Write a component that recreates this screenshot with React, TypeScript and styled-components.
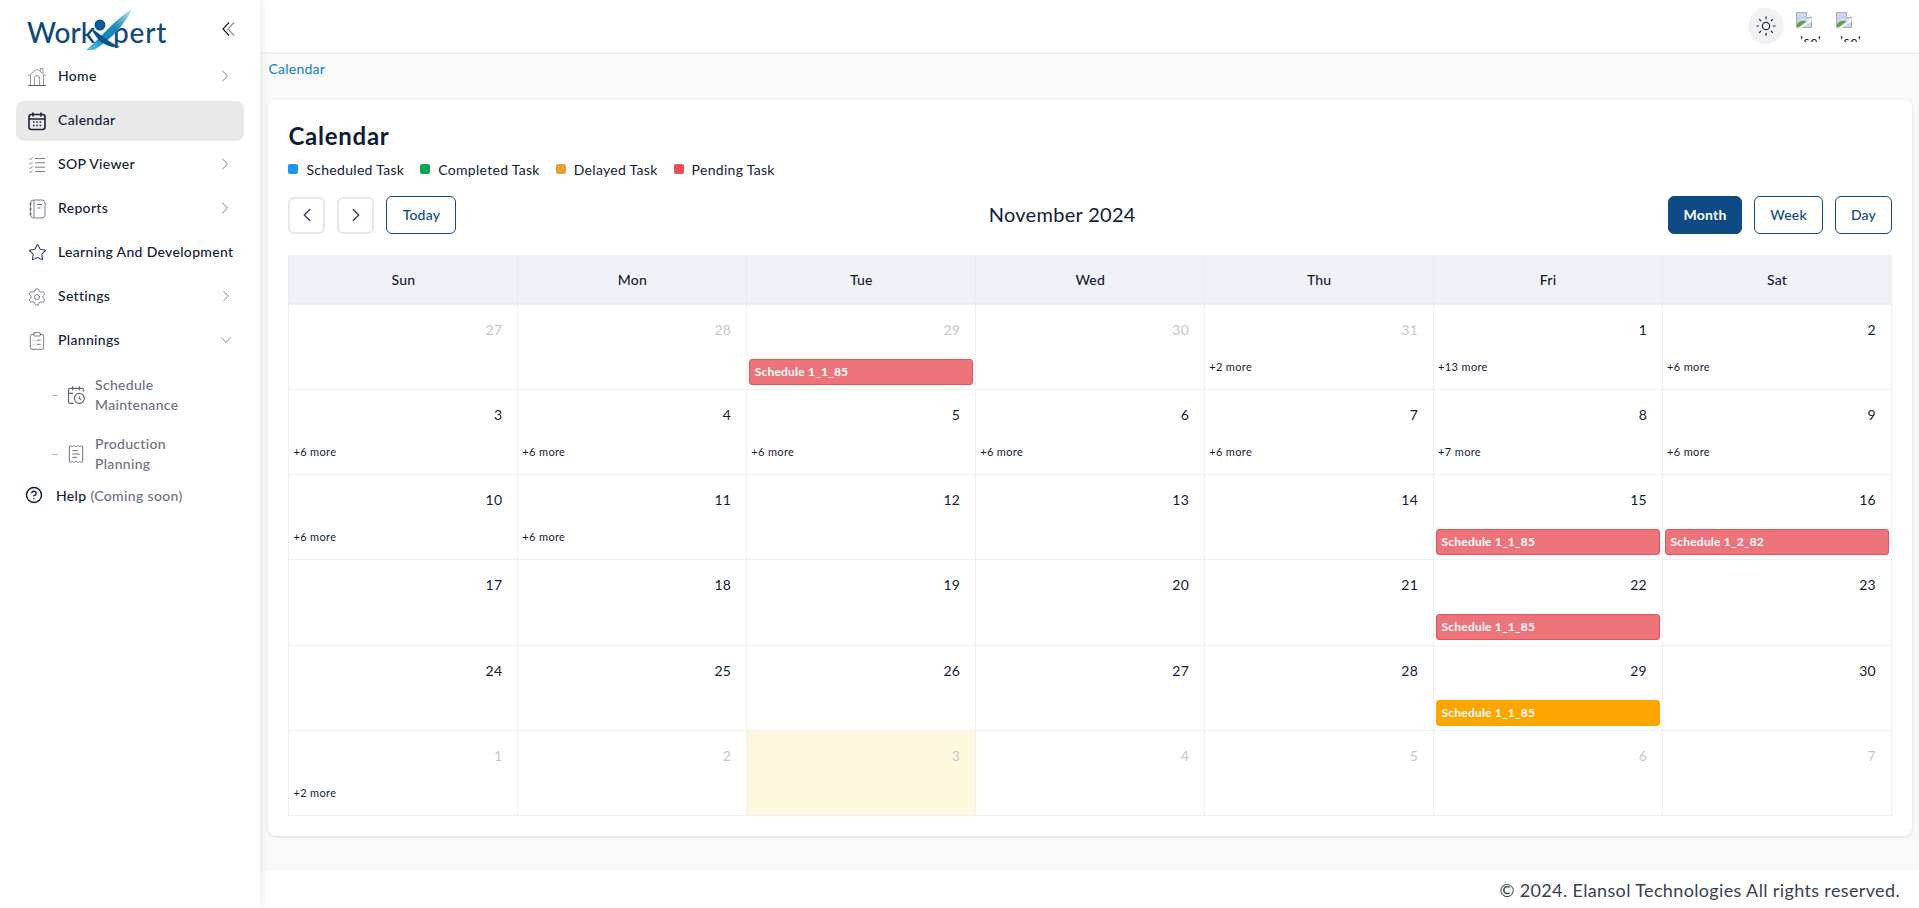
import styled, { createGlobalStyle } from 'styled-components';
import {
  CalendarClock,
  ChevronDown,
  ChevronLeft,
  ChevronRight,
  CircleHelp,
  ClipboardList,
  ReceiptText,
  Settings,
  Star,
  Sun,
} from 'lucide-react';

const GlobalStyle = createGlobalStyle`
  html, body {
    margin: 0;
    padding: 0;
    height: 100%;
    overflow: hidden;
    background: #f9f9fa;
    font-family: "Lato", "Noto Sans", sans-serif;
    color: #111c36;
  }
  * { box-sizing: border-box; }
`;

const Page = styled.div`
  display: flex;
  width: 1919px;
  height: 908px;
`;

const Sidebar = styled.aside`
  display: flex;
  flex-direction: column;
  flex: 0 0 260px;
  height: 100%;
  padding: 0 16px;
  background: #fff;
  box-shadow: 2px 0 8px rgba(30, 40, 70, 0.08);
  z-index: 2;
`;

const LogoRow = styled.div`
  display: flex;
  align-items: center;
  justify-content: space-between;
  height: 57px;
  padding: 0 0 0 11px;
`;

const LogoSvg = styled.svg`
  display: block;
`;

const Collapse = styled.svg`
  display: block;
  margin-right: 8px;
`;

const Nav = styled.nav`
  display: flex;
  flex-direction: column;
  gap: 4px;
`;

const NavItem = styled.div<{ $active?: boolean }>`
  display: flex;
  align-items: center;
  height: 40px;
  padding: 0 11px;
  border-radius: 8px;
  background: ${(p) => (p.$active ? '#e9e9ea' : 'transparent')};
`;

const NavIcon = styled.span<{ $color?: string }>`
  display: flex;
  align-items: center;
  justify-content: center;
  flex: 0 0 20px;
  height: 20px;
  margin-top: -1px;
  color: ${(p) => p.$color || '#5f6673'};
`;

const NavLabel = styled.span`
  flex: 1;
  margin: -3px 0 0 11px;
  font-size: 14px;
  font-weight: 500;
  letter-spacing: 0.32px;
  white-space: nowrap;
  color: #111c36;
`;

const NavArrow = styled.span`
  display: flex;
  margin: -2px -2px 0 0;
  color: #6b7280;
`;

const SubNav = styled.div`
  display: flex;
  flex-direction: column;
  gap: 19px;
  padding: 15px 0 0 36px;
  margin-top: -1px;
`;

const SubItem = styled.div`
  display: flex;
  align-items: center;
  height: 40px;
`;

const SubDash = styled.span`
  flex: 0 0 6px;
  height: 1px;
  margin-right: 8px;
  background: #b5b9c0;
`;

const SubIcon = styled.span`
  display: flex;
  flex: 0 0 20px;
  justify-content: center;
  color: #5f6673;
`;

const SubLabel = styled.span`
  margin-left: 9px;
  font-size: 14px;
  line-height: 20px;
  font-weight: 500;
  letter-spacing: 0.3px;
  color: #6b7280;
`;

const HelpRow = styled.div`
  display: flex;
  align-items: center;
  gap: 13px;
  height: 24px;
  margin-top: 9px;
  padding-left: 9px;
  font-size: 14px;
  font-weight: 500;
  letter-spacing: 0.35px;
  color: #111c36;
`;

const HelpNote = styled.span`
  color: #6b7280;
`;

const Main = styled.main`
  display: flex;
  flex: 1;
  flex-direction: column;
  min-width: 0;
  height: 100%;
`;

const TopBar = styled.header`
  display: flex;
  align-items: center;
  justify-content: flex-end;
  flex: 0 0 52px;
  padding-right: 48px;
  background: #fff;
  box-shadow: 0 1px 2px rgba(30, 40, 70, 0.08);
`;

const ThemeButton = styled.span`
  display: flex;
  align-items: center;
  justify-content: center;
  width: 36px;
  height: 36px;
  margin-right: 7px;
  border-radius: 50%;
  background: #f1f2f6;
  color: #222b3c;
`;

const BrokenAvatar = styled.span`
  display: flex;
  flex-direction: column;
  align-items: center;
  align-self: flex-start;
  width: 40px;
  height: 42px;
  padding-top: 12px;
  overflow: hidden;
  svg { flex: 0 0 16px; align-self: flex-start; margin-left: 5px; }
`;

const AvatarAlt = styled.span`
  flex: 0 0 14px;
  margin-top: 6px;
  font-size: 13px;
  line-height: 14px;
  letter-spacing: 1px;
  color: #111;
`;

const Crumb = styled.div`
  height: 48px;
  padding: 8px 0 0 8px;
  font-size: 14px;
  line-height: 18px;
  letter-spacing: 0.25px;
  color: #0b82c9;
`;

const Card = styled.section`
  margin: 0 7px 0 8px;
  padding: 20px 20px 20px;
  border-radius: 8px;
  background: #fff;
  box-shadow: 0 1px 3px rgba(30, 40, 70, 0.14);
`;

const Title = styled.h1`
  margin: 0;
  font-size: 24px;
  line-height: 32px;
  font-weight: 700;
  letter-spacing: 0.75px;
  color: #111c36;
`;

const Legend = styled.div`
  display: flex;
  gap: 16px;
  height: 20px;
  margin-top: 7px;
`;

const LegendItem = styled.span`
  display: flex;
  align-items: center;
  gap: 8px;
  font-size: 14px;
  letter-spacing: 0.3px;
  color: #111c36;
`;

const LegendDot = styled.span<{ $color: string }>`
  width: 10px;
  height: 10px;
  border-radius: 2px;
  background: ${(p) => p.$color};
`;

const Toolbar = styled.div`
  display: flex;
  align-items: center;
  justify-content: space-between;
  height: 38px;
  margin-top: 17px;
`;

const ToolGroup = styled.div`
  display: flex;
  align-items: center;
  gap: 12px;
`;

const ArrowButton = styled.span`
  display: flex;
  align-items: center;
  justify-content: center;
  width: 37px;
  height: 37px;
  border: 2px solid #e5e7eb;
  border-radius: 6px;
  color: #3b4658;
`;

const ViewButton = styled.span<{ $active?: boolean; $width: number }>`
  display: flex;
  align-items: center;
  justify-content: center;
  width: ${(p) => p.$width}px;
  height: 38px;
  padding-bottom: 2px;
  border: 1px solid #0f4a84;
  border-radius: 6px;
  font-size: 14px;
  font-weight: ${(p) => (p.$active ? 700 : 500)};
  letter-spacing: 0.2px;
  color: ${(p) => (p.$active ? '#fff' : '#0f4a84')};
  background: ${(p) => (p.$active ? '#0f4a84' : '#fff')};
`;

const MonthTitle = styled.h2`
  margin: -2px 0 0;
  font-size: 20px;
  font-weight: 400;
  letter-spacing: 0.3px;
  color: #111c36;
`;

const Grid = styled.div`
  display: grid;
  grid-template-columns: repeat(7, 1fr);
  grid-template-rows: 49px repeat(6, 1fr);
  height: 561px;
  margin-top: 21px;
  border-right: 1px solid #eff0f3;
  border-bottom: 1px solid #eff0f3;
`;

const HeadCell = styled.div`
  display: flex;
  align-items: center;
  justify-content: center;
  border-left: 1px solid #e9ebf0;
  border-bottom: 1px solid #e9ebf0;
  background: #f1f2f7;
  font-size: 14px;
  font-weight: 500;
  letter-spacing: 0.2px;
  color: #111c36;
`;

const DayCell = styled.div<{ $today?: boolean }>`
  display: flex;
  flex-direction: column;
  min-width: 0;
  border-left: 1px solid #eff0f3;
  border-top: 1px solid #eff0f3;
  background: ${(p) => (p.$today ? '#fef8de' : '#fff')};
`;

const DayNumber = styled.div<{ $muted?: boolean }>`
  flex: 0 0 53px;
  padding: 13px 15px 0 0;
  text-align: right;
  font-size: 14px;
  line-height: 24px;
  letter-spacing: 0.3px;
  color: ${(p) => (p.$muted ? '#c6c8cc' : '#111c36')};
`;

const More = styled.div`
  padding-left: 4px;
  font-size: 11px;
  line-height: 17px;
  letter-spacing: 0.35px;
  color: #111c36;
`;

const EventBar = styled.div<{ $kind: 'pending' | 'delayed' }>`
  height: 26px;
  margin: 1px 2px 0;
  padding: 0 4.5px;
  border: 1px solid ${(p) => (p.$kind === 'pending' ? '#e5545c' : '#ffa500')};
  border-radius: 3px;
  background: ${(p) => (p.$kind === 'pending' ? '#ee747b' : '#ffa500')};
  font-size: 12px;
  line-height: 23px;
  font-weight: 700;
  letter-spacing: 0.2px;
  color: #fff;
  white-space: nowrap;
  overflow: hidden;
`;

const Footer = styled.footer`
  display: flex;
  align-items: center;
  justify-content: flex-end;
  height: 37px;
  margin-top: auto;
  padding-right: 19px;
  border-radius: 6px 0 0 0;
  background: #fff;
  font-size: 18px;
  letter-spacing: 0.36px;
  color: #374151;
`;

type Day = {
  n: number;
  muted?: boolean;
  today?: boolean;
  more?: number;
  event?: { label: string; kind: 'pending' | 'delayed' };
};

const days: Day[] = [
  { n: 27, muted: true },
  { n: 28, muted: true },
  { n: 29, muted: true, event: { label: 'Schedule 1_1_85', kind: 'pending' } },
  { n: 30, muted: true },
  { n: 31, muted: true, more: 2 },
  { n: 1, more: 13 },
  { n: 2, more: 6 },
  { n: 3, more: 6 },
  { n: 4, more: 6 },
  { n: 5, more: 6 },
  { n: 6, more: 6 },
  { n: 7, more: 6 },
  { n: 8, more: 7 },
  { n: 9, more: 6 },
  { n: 10, more: 6 },
  { n: 11, more: 6 },
  { n: 12 },
  { n: 13 },
  { n: 14 },
  { n: 15, event: { label: 'Schedule 1_1_85', kind: 'pending' } },
  { n: 16, event: { label: 'Schedule 1_2_82', kind: 'pending' } },
  { n: 17 },
  { n: 18 },
  { n: 19 },
  { n: 20 },
  { n: 21 },
  { n: 22, event: { label: 'Schedule 1_1_85', kind: 'pending' } },
  { n: 23 },
  { n: 24 },
  { n: 25 },
  { n: 26 },
  { n: 27 },
  { n: 28 },
  { n: 29, event: { label: 'Schedule 1_1_85', kind: 'delayed' } },
  { n: 30 },
  { n: 1, muted: true, more: 2 },
  { n: 2, muted: true },
  { n: 3, muted: true, today: true },
  { n: 4, muted: true },
  { n: 5, muted: true },
  { n: 6, muted: true },
  { n: 7, muted: true },
];

const weekdays = ['Sun', 'Mon', 'Tue', 'Wed', 'Thu', 'Fri', 'Sat'];

const legend = [
  { label: 'Scheduled Task', color: '#2196f3' },
  { label: 'Completed Task', color: '#0aa755' },
  { label: 'Delayed Task', color: '#e5a03c' },
  { label: 'Pending Task', color: '#e9505a' },
];

const Logo = () => (
  <LogoSvg width="146" height="50" viewBox="0 0 146 50">
    <defs>
      <linearGradient id="swoosh" x1="0" y1="1" x2="1" y2="0">
        <stop offset="0" stopColor="#5cc8e0" />
        <stop offset="0.35" stopColor="#1583bd" />
        <stop offset="0.6" stopColor="#1a8cb8" />
        <stop offset="1" stopColor="#c0ecec" />
      </linearGradient>
    </defs>
    <text x="0" y="39" fontFamily="Lato, sans-serif" fontSize="28" fontWeight="500" fill="#0f4a7c">
      Work
    </text>
    <text x="86" y="39" fontFamily="Lato, sans-serif" fontSize="28" fontWeight="500" letterSpacing="0.8" fill="#0f4a7c">
      pert
    </text>
    <path d="M59 46 C72 36 88 15 105 5 C98 20 84 36 67 46 Z" fill="url(#swoosh)" />
    <path d="M64 24 C71 28 81 38 93 43 C80 45 69 36 64 24 Z" fill="#0f5188" />
    <circle cx="73" cy="21" r="5.5" fill="#0f5a96" />
  </LogoSvg>
);

const CollapseIcon = () => (
  <Collapse width="14" height="16" viewBox="0 0 14 16" fill="none" strokeWidth="1.2">
    <path d="M7 1.5 1 8l6 6.5" stroke="#1c2434" />
    <path d="M12 1.5 6 8l6 6.5" stroke="#8a8f98" />
  </Collapse>
);

const HomeIcon = () => (
  <svg width="20" height="20" viewBox="0 0 20 20" fill="none" stroke="#8a8f98" strokeWidth="0.9">
    <path d="M1 9 10 2 19 9" />
    <path d="M13.5 4V1.5h2.5v4.4" />
    <path d="M3.5 8v10.5h13V8" />
    <path d="M7.5 18.5V11a2.5 2.5 0 0 1 5 0v7.5" />
    <path d="M1 18.5h18" stroke="#4b5563" />
  </svg>
);

const CalendarIcon = () => (
  <svg width="20" height="20" viewBox="0 0 20 20" fill="none" stroke="#1c2434" strokeWidth="1.6">
    <rect x="2" y="3.5" width="16" height="15" rx="2.5" />
    <path d="M6 1.5v4M14 1.5v4M2 8h16" />
    <path d="M6 11h1.5M9.3 11h1.5M12.6 11h1.5M6 14.5h1.5M9.3 14.5h1.5M12.6 14.5h1.5" strokeWidth="1.4" />
  </svg>
);

const SopIcon = () => (
  <svg width="20" height="18" viewBox="0 0 20 18" fill="none" stroke="#7a808a" strokeWidth="1">
    <path d="M8 2.5h10M8 6.8h10M8 11.2h10M8 15.5h10" />
    <path d="M2 2.5l1.3 1.3L5.5 1.5M2 7l1.3 1.3L5.5 6M2 11.5l1.3 1.3 2.2-2.3M2 15.5l1.3 1 2.2-1.8" strokeWidth="0.9" />
  </svg>
);

const ReportsIcon = () => (
  <svg width="20" height="20" viewBox="0 0 20 20" fill="none" stroke="#6b7280" strokeWidth="0.9">
    <rect x="3.5" y="1" width="14.5" height="18" rx="3" />
    <path d="M7 1v18" />
    <path d="M10 5.5h5M10 9h3.5" />
    <path d="M2 5h3M2 10h3M2 15h3" />
  </svg>
);

const BrokenImage = () => (
  <svg width="16" height="16" viewBox="0 0 16 16">
    <path d="M0.5 0.5H10.5L15.5 5.5V15.5H0.5Z" fill="#c9d7f0" stroke="#9aa0a6" strokeWidth="0.8" />
    <path d="M10.5 0.5V5.5H15.5" fill="#fff" stroke="#9aa0a6" strokeWidth="0.8" />
    <path d="M1 15V12C4 8 8 8 11 10L6 15Z" fill="#5aa545" />
    <path d="M15.5 6 2 16h4l9.5-7Z" fill="#fff" />
  </svg>
);

export default function App() {
  return (
    <Page>
      <GlobalStyle />
      <Sidebar>
        <LogoRow>
          <Logo />
          <CollapseIcon />
        </LogoRow>
        <Nav>
          <NavItem>
            <NavIcon><HomeIcon /></NavIcon>
            <NavLabel>Home</NavLabel>
            <NavArrow><ChevronRight size={20} strokeWidth={1.1} /></NavArrow>
          </NavItem>
          <NavItem $active>
            <NavIcon><CalendarIcon /></NavIcon>
            <NavLabel>Calendar</NavLabel>
          </NavItem>
          <NavItem>
            <NavIcon><SopIcon /></NavIcon>
            <NavLabel>SOP Viewer</NavLabel>
            <NavArrow><ChevronRight size={20} strokeWidth={1.1} /></NavArrow>
          </NavItem>
          <NavItem>
            <NavIcon><ReportsIcon /></NavIcon>
            <NavLabel>Reports</NavLabel>
            <NavArrow><ChevronRight size={20} strokeWidth={1.1} /></NavArrow>
          </NavItem>
          <NavItem>
            <NavIcon $color="#2f4570"><Star size={19} strokeWidth={1.4} /></NavIcon>
            <NavLabel>Learning And Development</NavLabel>
          </NavItem>
          <NavItem>
            <NavIcon><Settings size={20} strokeWidth={1} /></NavIcon>
            <NavLabel>Settings</NavLabel>
            <NavArrow><ChevronRight size={18} strokeWidth={1.1} /></NavArrow>
          </NavItem>
          <NavItem>
            <NavIcon><ClipboardList size={20} strokeWidth={1} /></NavIcon>
            <NavLabel>Plannings</NavLabel>
            <NavArrow><ChevronDown size={18} strokeWidth={1.1} /></NavArrow>
          </NavItem>
        </Nav>
        <SubNav>
          <SubItem>
            <SubDash />
            <SubIcon><CalendarClock size={20} strokeWidth={1.4} /></SubIcon>
            <SubLabel>Schedule<br />Maintenance</SubLabel>
          </SubItem>
          <SubItem>
            <SubDash />
            <SubIcon><ReceiptText size={20} strokeWidth={1.1} /></SubIcon>
            <SubLabel>Production<br />Planning</SubLabel>
          </SubItem>
        </SubNav>
        <HelpRow>
          <CircleHelp size={18} strokeWidth={1.9} color="#111c36" />
          <span>Help <HelpNote>(Coming soon)</HelpNote></span>
        </HelpRow>
      </Sidebar>
      <Main>
        <TopBar>
          <ThemeButton><Sun size={22} strokeWidth={1.3} /></ThemeButton>
          <BrokenAvatar><BrokenImage /><AvatarAlt>'se'</AvatarAlt></BrokenAvatar>
          <BrokenAvatar><BrokenImage /><AvatarAlt>'se'</AvatarAlt></BrokenAvatar>
        </TopBar>
        <Crumb>Calendar</Crumb>
        <Card>
          <Title>Calendar</Title>
          <Legend>
            {legend.map((l) => (
              <LegendItem key={l.label}>
                <LegendDot $color={l.color} />
                {l.label}
              </LegendItem>
            ))}
          </Legend>
          <Toolbar>
            <ToolGroup>
              <ArrowButton><ChevronLeft size={22} strokeWidth={1.6} /></ArrowButton>
              <ArrowButton><ChevronRight size={22} strokeWidth={1.6} /></ArrowButton>
              <ViewButton $width={70}>Today</ViewButton>
            </ToolGroup>
            <MonthTitle>November 2024</MonthTitle>
            <ToolGroup>
              <ViewButton $active $width={74}>Month</ViewButton>
              <ViewButton $width={69}>Week</ViewButton>
              <ViewButton $width={57}>Day</ViewButton>
            </ToolGroup>
          </Toolbar>
          <Grid>
            {weekdays.map((d) => (
              <HeadCell key={d}>{d}</HeadCell>
            ))}
            {days.map((d, i) => (
              <DayCell key={i} $today={d.today}>
                <DayNumber $muted={d.muted}>{d.n}</DayNumber>
                {d.more ? <More>+{d.more} more</More> : null}
                {d.event ? <EventBar $kind={d.event.kind}>{d.event.label}</EventBar> : null}
              </DayCell>
            ))}
          </Grid>
        </Card>
        <Footer>© 2024. Elansol Technologies All rights reserved.</Footer>
      </Main>
    </Page>
  );
}
